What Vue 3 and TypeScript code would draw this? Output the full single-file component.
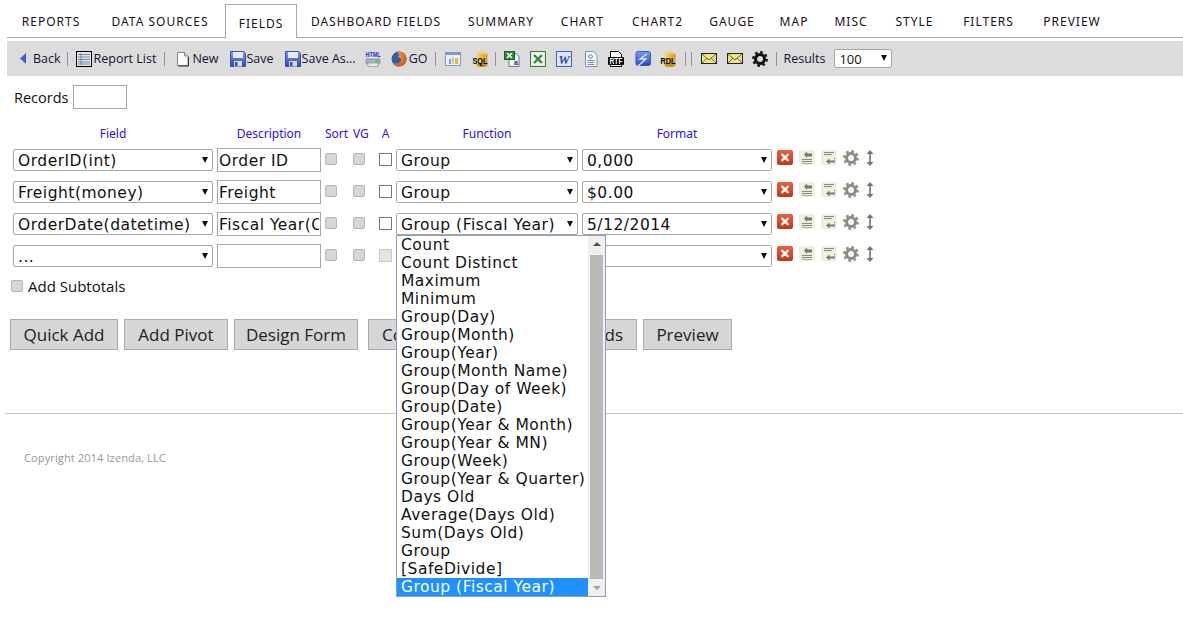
<template>
  <div class="page">
    <svg class="defs" width="0" height="0" aria-hidden="true">
      <defs>
        <linearGradient id="gBlue" x1="0" y1="0" x2="0" y2="1"><stop offset="0" stop-color="#7f9cf0" /><stop offset="1" stop-color="#2c45c0" /></linearGradient>
        <linearGradient id="gGold" x1="0" y1="0" x2="1" y2="0"><stop offset="0" stop-color="#f7d970" /><stop offset="1" stop-color="#d49a20" /></linearGradient>
        <linearGradient id="gRed" x1="0" y1="0" x2="0" y2="1"><stop offset="0" stop-color="#e8603c" /><stop offset="1" stop-color="#c8341a" /></linearGradient>
        <radialGradient id="gFox" cx="0.35" cy="0.35" r="0.8"><stop offset="0" stop-color="#fbb03b" /><stop offset="1" stop-color="#c8431a" /></radialGradient>
      </defs>
      <symbol id="i-list" viewBox="0 0 16 16">
        <rect x=".5" y=".5" width="15" height="15" fill="#e4e8ee" stroke="#000" />
        <path d="M2 3.500h12M2 6h12M2 8.500h12M2 11h12M2 13h12" stroke="#6f87a5" />
        <path d="M5 2v12" stroke="#6f87a5" />
      </symbol>
      <symbol id="i-new" viewBox="0 0 16 16">
        <path d="M2.500 1.500h7l3.500 3.500v9.500H2.500z" fill="#fcfcfc" stroke="#7f8894" />
        <path d="M9.500 1.500V5H13" fill="#d8dde6" stroke="#7f8894" />
        <path d="M13.500 6v9h-10" fill="none" stroke="#2a2f3a" />
      </symbol>
      <symbol id="i-save" viewBox="0 0 16 16">
        <path d="M.5 .5h13l2 2v13H.5z" fill="url(#gBlue)" stroke="#3a4fa8" />
        <rect x="3" y="1" width="10" height="6" fill="#e6eaf6" />
        <rect x="4" y="10" width="8" height="5.500" fill="#d6dcee" />
        <rect x="5" y="11" width="2.500" height="4" fill="#3a4fa8" />
      </symbol>
      <symbol id="i-html" viewBox="0 0 16 16">
        <rect x="3" y="5" width="10" height="3" fill="#f4f6f8" stroke="#8c98a8" stroke-width=".6" />
        <rect x="1" y="8" width="14" height="5" rx="1" fill="#a9b4c2" stroke="#6e7a8a" stroke-width=".6" />
        <rect x="3" y="12" width="10" height="3.500" fill="#e6eaef" stroke="#7f8a98" stroke-width=".6" />
        <rect x="10" y="9.500" width="3" height="2" fill="#3fcf4a" />
        <text x="8" y="5.500" text-anchor="middle" textLength="15" lengthAdjust="spacingAndGlyphs" class="tiny blue">HTML</text>
      </symbol>
      <symbol id="i-fox" viewBox="0 0 16 16">
        <circle cx="8" cy="8" r="7.500" fill="#2a5fa8" />
        <path d="M8 .5a7.500 7.500 0 1 1-7 10c1 1 2.500 2 4 2 3 0 5-2 5-4 0-1.500-2-2.500-3-2.500 0-1 1-2 2-2.500-1 0-2-.5-2.500-1C7 1.500 7.500 .6 8 .5z" fill="url(#gFox)" />
      </symbol>
      <symbol id="i-chart" viewBox="0 0 16 16">
        <rect x=".5" y="1.500" width="15" height="13" fill="#eef3fb" stroke="#7e9bc8" />
        <rect x="1" y="2" width="14" height="2" fill="#7e9bc8" />
        <rect x="4" y="8" width="2" height="5" fill="#7e9bc8" />
        <rect x="7" y="6" width="2" height="7" fill="#b9c7dd" />
        <rect x="10" y="7" width="3" height="6" fill="#f0b429" />
      </symbol>
      <symbol id="i-sql" viewBox="0 0 16 16">
        <ellipse cx="10" cy="3" rx="5.500" ry="2.500" fill="#f3cf62" />
        <rect x="4.500" y="3" width="11" height="11" fill="url(#gGold)" />
        <ellipse cx="10" cy="14" rx="5.500" ry="2" fill="#c8921c" />
        <text x="8" y="12.500" text-anchor="middle" textLength="15" lengthAdjust="spacingAndGlyphs" class="mini">SQL</text>
      </symbol>
      <symbol id="i-rdl" viewBox="0 0 16 16">
        <ellipse cx="10" cy="3" rx="5.500" ry="2.500" fill="#f3cf62" />
        <rect x="4.500" y="3" width="11" height="11" fill="url(#gGold)" />
        <ellipse cx="10" cy="14" rx="5.500" ry="2" fill="#c8921c" />
        <text x="8" y="12.500" text-anchor="middle" textLength="15" lengthAdjust="spacingAndGlyphs" class="mini">RDL</text>
      </symbol>
      <symbol id="i-xls1" viewBox="0 0 16 16">
        <path d="M5 2.500h7l3 3v10H5z" fill="#f4f7fb" stroke="#5a78a8" />
        <rect x=".5" y=".5" width="10" height="8" fill="#2f8a3c" stroke="#1f5e2a" />
        <path d="M3 2l5 5M8 2L3 7" stroke="#fff" stroke-width="1.300" />
        <text x="12" y="14" text-anchor="middle" class="tiny dark">a</text>
      </symbol>
      <symbol id="i-xls2" viewBox="0 0 16 16">
        <rect x=".5" y=".5" width="15" height="15" fill="#dfe9df" stroke="#3f7a46" />
        <rect x="2" y="2" width="12" height="12" fill="#f3f6f1" />
        <path d="M4 4l8 8M12 4l-8 8" stroke="#2e8a3c" stroke-width="2.400" />
      </symbol>
      <symbol id="i-doc" viewBox="0 0 16 16">
        <rect x=".5" y=".5" width="15" height="15" fill="#dbe6f6" stroke="#3f63b0" />
        <text x="8" y="13" text-anchor="middle" class="word">W</text>
      </symbol>
      <symbol id="i-page" viewBox="0 0 16 16">
        <path d="M2.500 .5h8L14 4v11.500H2.500z" fill="#f6f9fd" stroke="#7e93b5" />
        <path d="M5 5.500l2.500-2 2.500 2-2.500 2z" fill="none" stroke="#4f74b4" />
        <path d="M4.500 9.500h7M4.500 11.500h7M4.500 13.500h7" stroke="#6f8ec0" />
      </symbol>
      <symbol id="i-rtf" viewBox="0 0 16 16">
        <path d="M2.500 .5h8l3 3V8h-11z" fill="#fff" stroke="#000" />
        <rect x="0" y="6" width="16" height="8" rx="1" fill="#000" />
        <path d="M2.500 14v1.500h11V14" fill="#fff" stroke="#000" />
        <text x="8" y="12.800" text-anchor="middle" textLength="13" lengthAdjust="spacingAndGlyphs" class="mini white">RTF</text>
      </symbol>
      <symbol id="i-blue" viewBox="0 0 16 16">
        <rect x="1" y=".5" width="14.500" height="14" rx="2" fill="url(#gBlue)" stroke="#2a5fb0" />
        <path d="M12 3L5 8h6l-8 7" fill="none" stroke="#e4f0ff" stroke-width="1.300" />
      </symbol>
      <symbol id="i-mail" viewBox="0 0 16 16">
        <rect x=".5" y="2.500" width="15" height="10" fill="#f0e680" stroke="#222" />
        <path d="M1 3l7 6 7-6M1 12l5-5M15 12l-5-5" fill="none" stroke="#6b6b40" />
      </symbol>
      <symbol id="i-gear" viewBox="0 0 16 16">
        <circle cx="8" cy="8" r="4.500" fill="none" stroke="currentColor" stroke-width="3" />
        <circle cx="8" cy="8" r="6.700" fill="none" stroke="currentColor" stroke-width="2.400" stroke-dasharray="2.630 2.630" />
      </symbol>
      <symbol id="i-del" viewBox="0 0 16 16">
        <rect width="16" height="15" rx="2" fill="url(#gRed)" />
        <path d="M4.500 4l7 7M11.500 4l-7 7" stroke="#fff" stroke-width="2.400" />
      </symbol>
      <symbol id="i-left" viewBox="0 0 16 16">
        <rect width="16" height="15" rx="2" fill="#efeee0" />
        <path d="M3 9.500h10M3 11.500h10" stroke="#8a8878" />
        <path d="M3 13.500h10" stroke="#b0ae9e" />
        <path d="M5 4.500l3-3v2h5v3H8V8z" fill="#7a7868" />
      </symbol>
      <symbol id="i-right" viewBox="0 0 16 16">
        <rect width="16" height="15" rx="2" fill="#efeee0" />
        <path d="M3 2.500h10M3 4.500h8" stroke="#8a8878" />
        <path d="M13 6v4.500H8.500v-2l-3.500 3 3.500 3v-2H14" fill="#7a7868" />
      </symbol>
      <symbol id="i-move" viewBox="0 0 10 16">
        <path d="M5 0l3.500 4H5.800v8h2.700L5 16l-3.500-4h2.700V4H1.500z" fill="#77756a" />
      </symbol>
    </svg>

    <nav class="tabs">
      <a
        v-for="t in tabs"
        :key="t.label"
        class="tab"
        :class="{ active: t.label === 'FIELDS' }"
        :style="{ width: t.width + 'px' }"
      >{{ t.label }}</a>
    </nav>

    <div class="toolbar">
      <svg class="back" width="6" height="11" viewBox="0 0 6 11"><path d="M6 0v11L0 5.500z" fill="#3b5fd8" /></svg>
      <template v-for="(it, i) in toolbar" :key="i">
        <span v-if="it.sep" class="sep" :style="{ marginLeft: it.ml + 'px' }"></span>
        <svg v-else-if="it.icon" class="ti" :style="{ marginLeft: it.ml + 'px' }" width="16" height="16"><use :href="'#i-' + it.icon" /></svg>
        <span v-else class="tl" :style="{ marginLeft: it.ml + 'px' }">{{ it.label }}</span>
      </template>
      <div class="sel sel-results"><select><option>100</option></select></div>
    </div>

    <div class="records">
      <label>Records</label>
      <input class="rec-input" type="text" />
    </div>

    <div class="grid">
      <div class="hd c">Field</div>
      <div class="hd c">Description</div>
      <div class="hd">Sort</div>
      <div class="hd">VG</div>
      <div class="hd c">A</div>
      <div class="hd c">Function</div>
      <div class="hd c">Format</div>
      <div></div>

      <template v-for="(r, i) in rows" :key="i">
        <div class="sel"><select><option>{{ r.field }}</option></select></div>
        <input class="desc" type="text" :value="r.desc" />
        <input class="cb" type="checkbox" />
        <input class="cb" type="checkbox" />
        <input class="cb cb-a" :class="{ off: i === 3 }" type="checkbox" />
        <div class="sel" :class="{ open: i === 2 }">
          <select><option>{{ r.fn }}</option></select>
          <div v-if="i === 2" class="dropdown">
            <ul class="opts">
              <li v-for="o in options" :key="o" :class="{ on: o === r.fn }">{{ o }}</li>
            </ul>
            <div class="scroll">
              <span class="up"></span>
              <span class="thumb"></span>
              <span class="down"></span>
            </div>
          </div>
        </div>
        <div class="sel"><select><option>{{ r.format }}</option></select></div>
        <div class="acts">
          <svg width="16" height="16"><use href="#i-del" /></svg>
          <svg width="16" height="16"><use href="#i-left" /></svg>
          <svg width="16" height="16"><use href="#i-right" /></svg>
          <svg class="gear" width="16" height="16"><use href="#i-gear" /></svg>
          <svg width="10" height="16"><use href="#i-move" /></svg>
        </div>
      </template>
    </div>

    <label class="subtotals"><input class="cb" type="checkbox" />Add Subtotals</label>

    <div class="btns">
      <button>Quick Add</button>
      <button>Add Pivot</button>
      <button>Design Form</button>
      <div class="pair">
        <button>Combine</button>
        <button>Hide Fields</button>
      </div>
      <button>Preview</button>
    </div>

    <hr class="rule" />
    <div class="copy">Copyright 2014 Izenda, LLC</div>
  </div>
</template>

<script setup lang="ts">
interface ToolItem {
  ml: number
  sep?: boolean
  icon?: string
  label?: string
}

const tabs = [
  { label: 'REPORTS', width: 88 },
  { label: 'DATA SOURCES', width: 130 },
  { label: 'FIELDS', width: 72 },
  { label: 'DASHBOARD FIELDS', width: 158 },
  { label: 'SUMMARY', width: 92 },
  { label: 'CHART', width: 71 },
  { label: 'CHART2', width: 79 },
  { label: 'GAUGE', width: 70 },
  { label: 'MAP', width: 54 },
  { label: 'MISC', width: 60 },
  { label: 'STYLE', width: 67 },
  { label: 'FILTERS', width: 81 },
  { label: 'PREVIEW', width: 86 },
]

const toolbar: ToolItem[] = [
  { ml: 7, label: 'Back' },
  { ml: 6, sep: true },
  { ml: 8, icon: 'list' },
  { ml: 2, label: 'Report List' },
  { ml: 8, sep: true },
  { ml: 10, icon: 'new' },
  { ml: 1, label: 'New' },
  { ml: 11, icon: 'save' },
  { ml: 1, label: 'Save' },
  { ml: 11, icon: 'save' },
  { ml: 1, label: 'Save As...' },
  { ml: 9, icon: 'html' },
  { ml: 10, icon: 'fox' },
  { ml: 2, label: 'GO' },
  { ml: 8, sep: true },
  { ml: 9, icon: 'chart' },
  { ml: 11, icon: 'sql' },
  { ml: 7, sep: true },
  { ml: 8, icon: 'xls1' },
  { ml: 10, icon: 'xls2' },
  { ml: 10, icon: 'doc' },
  { ml: 11, icon: 'page' },
  { ml: 9, icon: 'rtf' },
  { ml: 11, icon: 'blue' },
  { ml: 9, icon: 'rdl' },
  { ml: 9, sep: true },
  { ml: 5, sep: true },
  { ml: 9, icon: 'mail' },
  { ml: 10, icon: 'mail' },
  { ml: 9, icon: 'gear' },
  { ml: 8, sep: true },
  { ml: 6, label: 'Results' },
]

const rows = [
  { field: 'OrderID(int)', desc: 'Order ID', fn: 'Group', format: '0,000' },
  { field: 'Freight(money)', desc: 'Freight', fn: 'Group', format: '$0.00' },
  { field: 'OrderDate(datetime)', desc: 'Fiscal Year(OrderDate)', fn: 'Group (Fiscal Year)', format: '5/12/2014' },
  { field: '...', desc: '', fn: '...', format: '...' },
]

const options = [
  'Count', 'Count Distinct', 'Maximum', 'Minimum', 'Group(Day)', 'Group(Month)', 'Group(Year)',
  'Group(Month Name)', 'Group(Day of Week)', 'Group(Date)', 'Group(Year & Month)', 'Group(Year & MN)',
  'Group(Week)', 'Group(Year & Quarter)', 'Days Old', 'Average(Days Old)', 'Sum(Days Old)', 'Group',
  '[SafeDivide]', 'Group (Fiscal Year)',
]
</script>

<style>
html, body { background: #fff; }
</style>

<style scoped>
.page {
  position: relative;
  height: 625px;
  overflow: hidden;
  font-family: "DejaVu Sans", sans-serif;
  color: #111;
}
.defs { position: absolute; }
.tiny { font: bold 7px "Liberation Sans", sans-serif; }
.blue { fill: #1a35e0; }
.dark { fill: #234; font-size: 7px; }
.mini { font: bold 9.500px "Liberation Sans", sans-serif; fill: #000; }
.white { fill: #fff; }
.word { font: italic bold 13px "Liberation Serif", serif; fill: #2a4fb0; }

/* Tabs */
.tabs {
  display: flex;
  height: 37px;
  margin-left: 7px;
  border-bottom: 1px solid #aaa;
  font-family: "Noto Sans", sans-serif;
  font-size: 12px;
  letter-spacing: 1px;
}
.tab {
  flex: none;
  padding-top: 12px;
  line-height: 20px;
  text-align: center;
  color: #1a1020;
  white-space: nowrap;
}
.tab.active {
  box-sizing: border-box;
  height: 34px;
  margin-top: 4px;
  padding-top: 9px;
  border: 1px solid #aaa;
  border-bottom: 0;
  background: #fff;
}

/* Toolbar */
.toolbar {
  display: flex;
  align-items: center;
  height: 35px;
  margin: 3px 0 0 7px;
  padding-left: 13px;
  background: #dcdcdc;
  font-family: "Open Sans", sans-serif;
  font-size: 12.500px;
  color: #1a1030;
}
.back { flex: none; }
.ti { flex: none; color: #111; }
.tl { white-space: nowrap; }
.sep { flex: none; width: 1px; height: 14px; background: #9a8f98; }

/* Selects */
.sel { position: relative; height: 22px; }
.sel select {
  appearance: none;
  display: block;
  width: 100%;
  height: 22px;
  padding: 2px 16px 0 4px;
  border: 1px solid #a6a6a6;
  border-radius: 2px;
  background: #fff;
  font-family: "DejaVu Sans", sans-serif;
  font-size: 15.500px;
  letter-spacing: .5px;
  color: #111;
}
.sel::after {
  content: "";
  position: absolute;
  right: 5px;
  top: 8px;
  border-style: solid;
  border-width: 6px 3px 0;
  border-color: #111 transparent transparent;
  pointer-events: none;
}
.sel-results { width: 58px; height: 19px; margin-left: 9px; flex: none; }
.sel-results select { height: 19px; padding-top: 0; font-size: 13px; letter-spacing: 0; font-family: "Open Sans", sans-serif; }
.sel-results::after { top: 6px; }

/* Records */
.records {
  display: flex;
  align-items: center;
  height: 24px;
  margin: 9px 0 0 14px;
  font-family: "Open Sans", sans-serif;
  font-size: 14.500px;
}
.rec-input {
  box-sizing: border-box;
  width: 54px;
  height: 24px;
  margin-left: 5px;
  border: 1px solid #aaa;
}

/* Field grid */
.grid {
  display: grid;
  grid-template-columns: 200px 104px 24px 22px 13px 182px 190px auto;
  column-gap: 4px;
  row-gap: 8px;
  align-items: center;
  justify-content: start;
  margin: 18px 0 0 13px;
}
.hd {
  height: 14px;
  margin-bottom: -1px;
  font-family: "Noto Sans", sans-serif;
  font-size: 12px;
  line-height: 14px;
  color: #2a10f0;
  white-space: nowrap;
}
.hd.c { text-align: center; }
.desc {
  box-sizing: border-box;
  width: 104px;
  height: 24px;
  padding: 2px 1px 0;
  border: 1px solid #aaa;
  font-family: "DejaVu Sans", sans-serif;
  font-size: 15.500px;
  letter-spacing: .5px;
  color: #111;
}
.cb {
  appearance: none;
  width: 12px;
  height: 12px;
  margin: -2px 0 0;
  border: 1px solid #b4b4b4;
  border-radius: 2px;
  background: #d6d6d6;
}
.cb-a {
  width: 13px;
  height: 13px;
  border: 1px solid #777;
  border-radius: 0;
  background: #fff;
}
.cb-a.off { border-color: #ccc; background: #e4e4e4; }
.acts {
  display: flex;
  align-items: center;
  gap: 6px;
  height: 16px;
  margin: -5px 0 0 1px;
}
.gear { color: #8f8d7e; }

/* Dropdown list, open over the rows below */
.open { z-index: 2; }
.dropdown {
  position: absolute;
  left: 0;
  top: 22px;
  display: flex;
  box-sizing: border-box;
  width: 210px;
  height: 362px;
  border: 1px solid #8aa0bc;
  background: #fff;
}
.opts {
  flex: 1;
  margin: 0;
  padding: 0;
  list-style: none;
  font-family: "DejaVu Sans", sans-serif;
  font-size: 15.500px;
  letter-spacing: .5px;
  line-height: 18px;
  color: #111;
}
.opts li { padding-left: 4px; white-space: nowrap; }
.opts li.on { background: #1e90ff; color: #fff; }
.scroll {
  display: flex;
  flex-direction: column;
  align-items: center;
  width: 17px;
  background: #f0f0f0;
}
.up, .down {
  flex: none;
  width: 0;
  height: 0;
  margin: 6px 0;
  border-style: solid;
  border-color: transparent;
}
.up { border-width: 0 4px 4px; border-bottom-color: #505050; }
.down { border-width: 4px 4px 0; border-top-color: #a3a3a3; }
.thumb { flex: 1; width: 13px; margin: 3px 0 1px; background: #bababa; }

/* Lower part */
.subtotals {
  display: flex;
  align-items: center;
  gap: 5px;
  height: 20px;
  margin: 8px 0 0 11px;
  font-family: "Open Sans", sans-serif;
  font-size: 15px;
}
.subtotals .cb { margin: 0; }
.btns {
  display: grid;
  grid-template-columns: 108px 104px 124px 273px 89px;
  gap: 6px;
  margin: 23px 0 0 10px;
}
.btns button {
  box-sizing: border-box;
  height: 31px;
  padding: 0;
  border: 1px solid #aaa;
  background: #d6d6d6;
  font-family: "Open Sans", sans-serif;
  font-size: 17px;
  color: #222;
  white-space: nowrap;
}
.pair {
  display: flex;
  gap: 6px;
  margin-left: 4px;
}
.pair button:first-child { flex: 1; text-align: left; padding-left: 13px; }
.pair button:last-child { flex: none; padding: 0 13px; }
.rule {
  height: 1px;
  margin: 63px 0 0 5px;
  border: 0;
  background: #c8c8c8;
}
.copy {
  margin: 36px 0 0 24px;
  font-family: "Open Sans", sans-serif;
  font-size: 11.250px;
  color: #999;
}
</style>
